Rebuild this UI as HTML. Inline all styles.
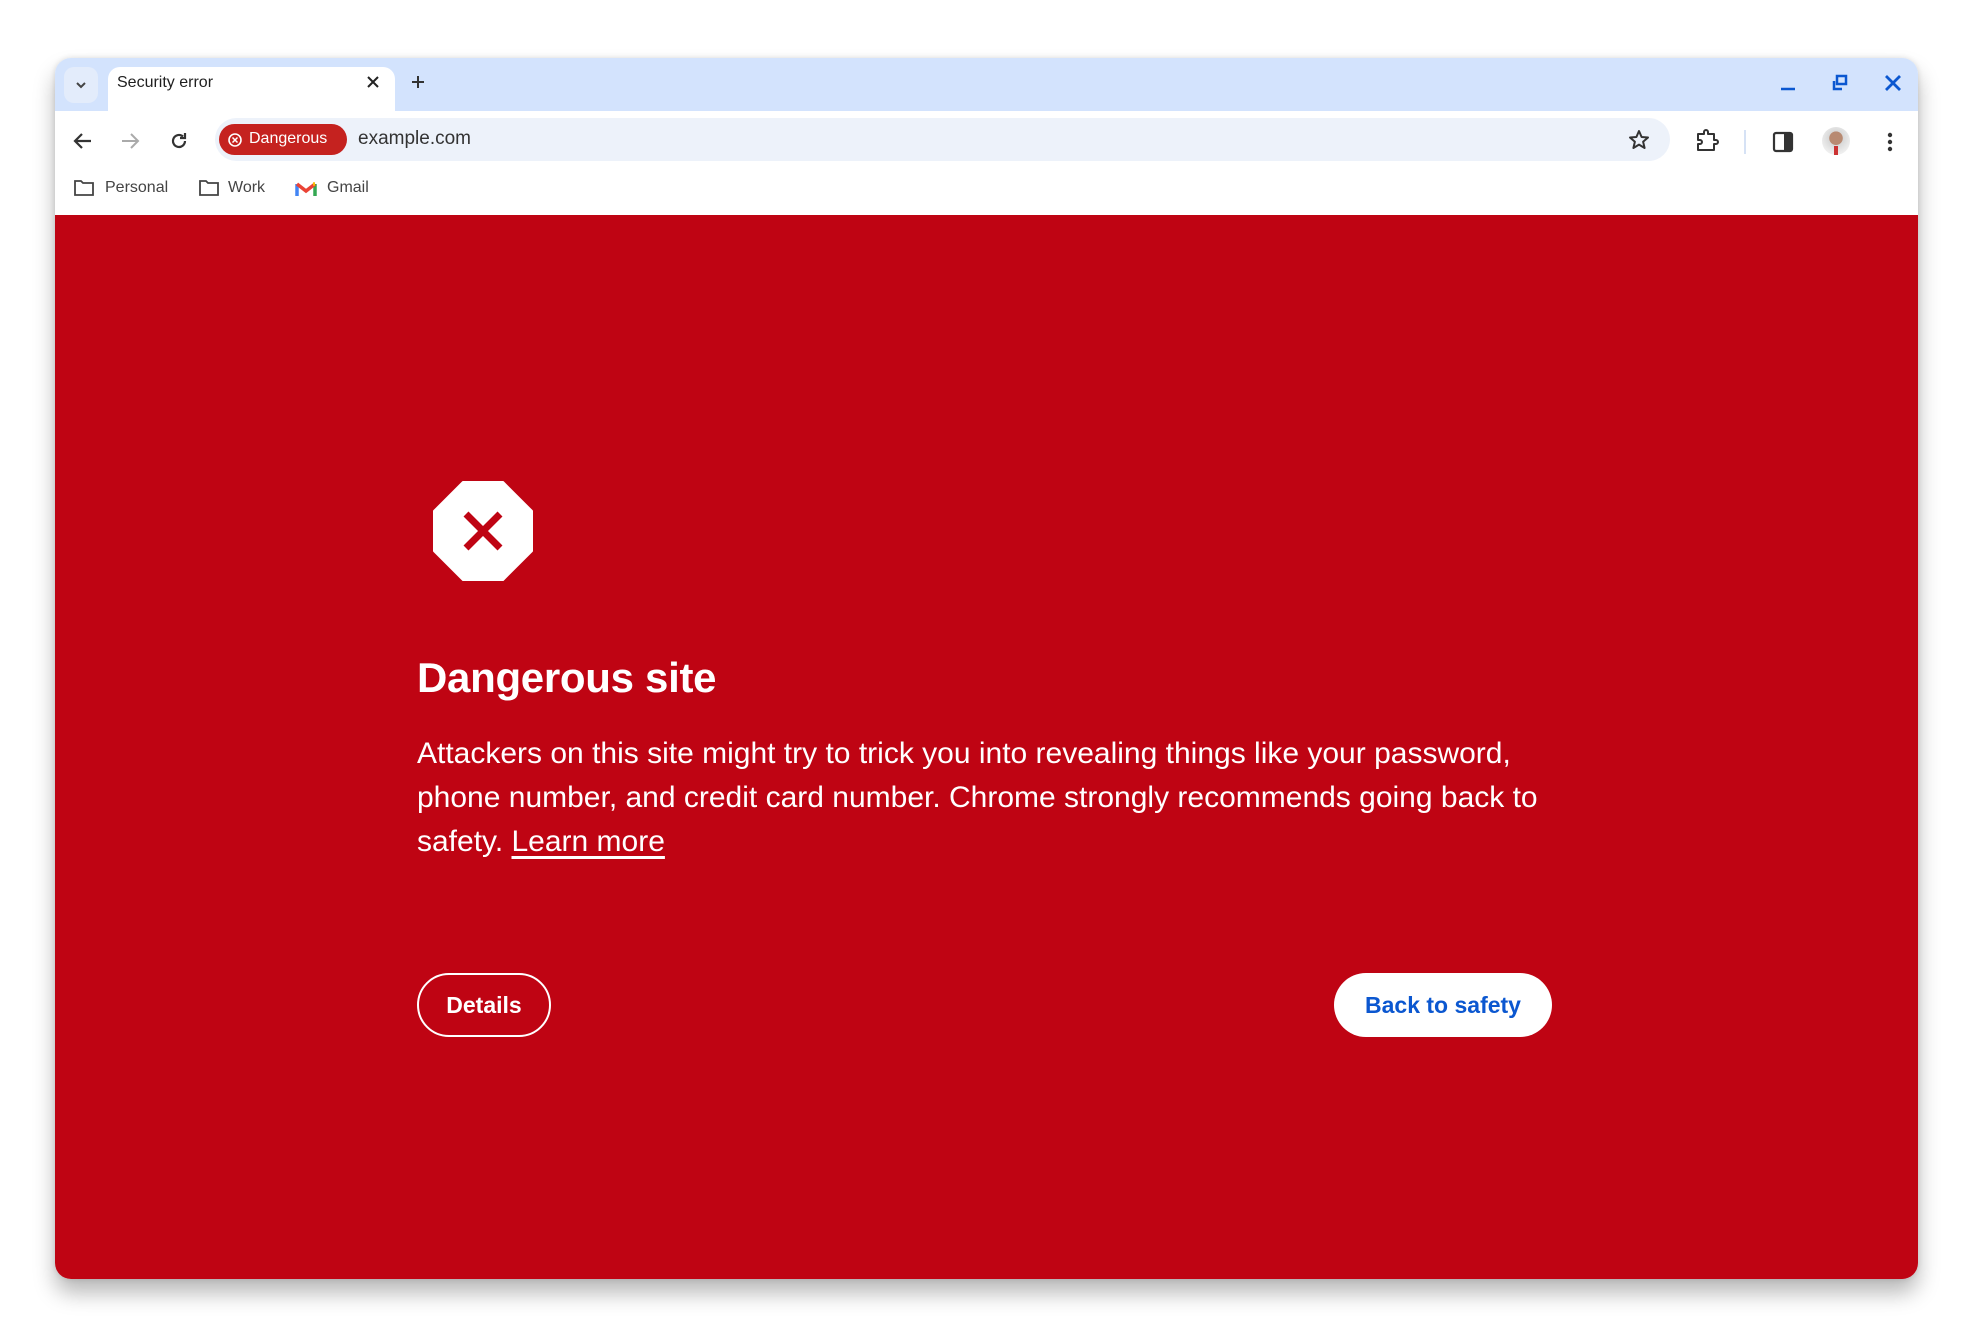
<!DOCTYPE html>
<html><head><meta charset="utf-8"><style>
*{margin:0;padding:0;box-sizing:border-box}
body{width:1976px;height:1338px;background:#fff;position:relative;overflow:hidden;font-family:"Liberation Sans",sans-serif}
.win{position:absolute;left:55px;top:58px;width:1863px;height:1221px;border-radius:16px;overflow:hidden;background:#fff;box-shadow:0 14px 22px rgba(0,0,0,.28),0 0 6px rgba(0,0,0,.12)}
.tabbar{position:absolute;left:0;top:0;width:100%;height:53px;background:#d3e3fd}
.tab{position:absolute;left:53px;top:9px;width:287px;height:50px;background:#fff;border-radius:12px 12px 0 0}
.abs{position:absolute}
.txt{position:absolute;white-space:nowrap;color:#1f1f1f}
.omni{position:absolute;left:160px;top:60px;width:1455px;height:43px;border-radius:22px;background:#edf2fa}
.chip{position:absolute;left:4px;top:6px;width:128px;height:31px;border-radius:16px;background:#c5221f;color:#fff;font-size:16px}
.red{position:absolute;left:0;top:157px;width:100%;height:1064px;background:#bf0413}
.h1{position:absolute;left:362px;top:596px;font-size:42px;font-weight:700;color:#fff;white-space:nowrap;letter-spacing:-0.3px}
.p{position:absolute;left:362px;top:674px;font-size:30px;line-height:44px;color:#fff;white-space:nowrap}
.p a{color:#fff;text-decoration:underline;text-underline-offset:5px}
.btn1{position:absolute;left:362px;top:915px;width:134px;height:64px;border:2px solid #fff;border-radius:32px;color:#fff;font-size:23px;font-weight:700;display:flex;align-items:center;justify-content:center}
.btn2{position:absolute;left:1279px;top:915px;width:218px;height:64px;background:#fff;border-radius:32px;color:#0b57d0;font-size:23px;font-weight:700;display:flex;align-items:center;justify-content:center}
</style></head><body>
<div class="win">
 <div class="tabbar"></div>
 <div class="abs" style="left:9px;top:9px;width:34px;height:36px;border-radius:10px;background:#e3ecfb"></div>
 <svg class="abs" style="left:19px;top:20px" width="14" height="14" viewBox="0 0 14 14"><path d="M3 5l4 4 4-4" stroke="#444" stroke-width="2" fill="none"/></svg>
 <div class="tab"></div>
 <div class="txt" style="left:62px;top:16px;font-size:16px">Security error</div>
 <svg class="abs" style="left:311px;top:17px" width="14" height="14" viewBox="0 0 14 14"><path d="M2 2l10 10M12 2L2 12" stroke="#222" stroke-width="2"/></svg>
 <svg class="abs" style="left:355px;top:16px" width="16" height="16" viewBox="0 0 16 16"><path d="M8 2v12M2 8h12" stroke="#333" stroke-width="2"/></svg>
 <svg class="abs" style="left:1723px;top:16px" width="20" height="20" viewBox="0 0 20 20"><path d="M3 15h14" stroke="#0b57d0" stroke-width="2.5"/></svg>
 <svg class="abs" style="left:1775px;top:15px" width="20" height="20" viewBox="0 0 20 20"><rect x="7" y="3" width="9" height="8" fill="none" stroke="#0b57d0" stroke-width="2.5"/><path d="M4 8v8h8" fill="none" stroke="#0b57d0" stroke-width="2.5"/></svg>
 <svg class="abs" style="left:1828px;top:15px" width="20" height="20" viewBox="0 0 20 20"><path d="M3 3l14 14M17 3L3 17" stroke="#0b57d0" stroke-width="2.8"/></svg>
 <svg class="abs" style="left:17px;top:72px" width="22" height="22" viewBox="0 0 22 22"><path d="M19 11H4M10 4l-7 7 7 7" stroke="#333" stroke-width="2.2" fill="none"/></svg>
 <svg class="abs" style="left:64px;top:72px" width="22" height="22" viewBox="0 0 22 22"><path d="M3 11h15M12 4l7 7-7 7" stroke="#aaa" stroke-width="2" fill="none"/></svg>
 <svg class="abs" style="left:113px;top:72px" width="22" height="22" viewBox="0 0 22 22"><path d="M17 11a6 6 0 1 1-2-4.5" stroke="#333" stroke-width="2.2" fill="none"/><path d="M17 3v5h-5" stroke="#333" stroke-width="2.2" fill="none"/></svg>
 <div class="omni">
  <div class="chip"><svg class="abs" style="left:8px;top:8px" width="16" height="16" viewBox="0 0 16 16"><circle cx="8" cy="8" r="6" stroke="#fff" stroke-width="1.6" fill="none"/><path d="M5.5 5.5l5 5M10.5 5.5l-5 5" stroke="#fff" stroke-width="1.5"/></svg><span class="abs" style="left:30px;top:6px">Dangerous</span></div>
  <div class="txt" style="left:143px;top:10px;font-size:19px;color:#333">example.com</div>
  <svg class="abs" style="left:1412px;top:10px" width="24" height="24" viewBox="0 0 24 24"><path d="M12 3l2.6 6 6.4.5-4.9 4.2 1.5 6.3L12 16.6 6.4 20l1.5-6.3L3 9.5 9.4 9z" stroke="#333" stroke-width="2" fill="none" stroke-linejoin="round"/></svg>
 </div>
 <svg class="abs" style="left:1639px;top:70px" width="26" height="26" viewBox="0 0 26 26"><path d="M4 6h6V4a2 2 0 0 1 4 0v2h6v6h2a2 2 0 0 1 0 4h-2v6H4v-6h2a2 2 0 0 0 0-4H4z" stroke="#333" stroke-width="2" fill="none" stroke-linejoin="round"/></svg>
 <div class="abs" style="left:1689px;top:72px;width:2px;height:24px;background:#d6e2f5"></div>
 <svg class="abs" style="left:1716px;top:72px" width="24" height="24" viewBox="0 0 24 24"><rect x="3" y="3" width="18" height="18" rx="2" fill="none" stroke="#333" stroke-width="2.2"/><rect x="13" y="3" width="8" height="18" fill="#333"/></svg>
 <div class="abs" style="left:1767px;top:69px;width:28px;height:28px;border-radius:50%;background:radial-gradient(circle at 50% 40%,#b88a72 0 30%,#d8d8d8 32%,#eee 70%)"></div>
 <div class="abs" style="left:1779px;top:88px;width:4px;height:9px;background:#c33"></div>
 <svg class="abs" style="left:1827px;top:72px" width="16" height="24" viewBox="0 0 16 24"><circle cx="8" cy="5" r="2.2" fill="#333"/><circle cx="8" cy="12" r="2.2" fill="#333"/><circle cx="8" cy="19" r="2.2" fill="#333"/></svg>
 <svg class="abs" style="left:18px;top:121px" width="22" height="18" viewBox="0 0 22 18"><path d="M2 2h6l2 2h10v12H2z" fill="none" stroke="#444" stroke-width="1.8"/></svg>
 <div class="txt" style="left:50px;top:121px;font-size:16px;color:#444">Personal</div>
 <svg class="abs" style="left:143px;top:121px" width="22" height="18" viewBox="0 0 22 18"><path d="M2 2h6l2 2h10v12H2z" fill="none" stroke="#444" stroke-width="1.8"/></svg>
 <div class="txt" style="left:173px;top:121px;font-size:16px;color:#444">Work</div>
 <svg class="abs" style="left:240px;top:123px" width="22" height="16" viewBox="0 0 22 16"><path d="M2 15V3" stroke="#4285f4" stroke-width="3.5"/><path d="M20 15V3" stroke="#34a853" stroke-width="3.5"/><path d="M2 3l9 7 9-7" stroke="#ea4335" stroke-width="3.5" fill="none"/><path d="M18 3l2 0" stroke="#fbbc04" stroke-width="3.5"/></svg>
 <div class="txt" style="left:272px;top:121px;font-size:16px;color:#444">Gmail</div>
 <div class="red"></div>
 <svg class="abs" style="left:378px;top:423px" width="100" height="100" viewBox="0 0 100 100"><path d="M30 1h40l29 29v40L70 99H30L1 70V30z" fill="#fff" stroke="#fff" stroke-width="2" stroke-linejoin="round"/><path d="M33 33l34 34M67 33L33 67" stroke="#bf0413" stroke-width="7"/></svg>
 <div class="h1">Dangerous site</div>
 <div class="p">Attackers on this site might try to trick you into revealing things like your password,<br>phone number, and credit card number. Chrome strongly recommends going back to<br>safety. <a>Learn more</a></div>
 <div class="btn1">Details</div>
 <div class="btn2">Back to safety</div>
</div>
</body></html>
